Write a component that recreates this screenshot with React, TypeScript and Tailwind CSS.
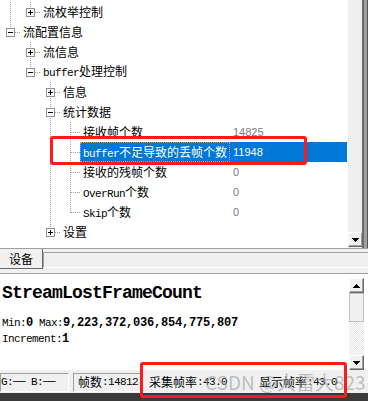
import React from "react";

type CellType = "empty" | "vline" | "tee" | "elbow";
type BoxType = "plus" | "minus" | undefined;

interface TreeRow {
  cells: CellType[];
  box?: BoxType;
  label: string;
  value?: string;
  selected?: boolean;
}

const rows: TreeRow[] = [
  { cells: ["vline", "elbow"], box: "plus", label: "流枚举控制" },
  { cells: ["elbow"], box: "minus", label: "流配置信息" },
  { cells: ["empty", "tee"], box: "plus", label: "流信息" },
  { cells: ["empty", "elbow"], box: "minus", label: "buffer处理控制" },
  { cells: ["empty", "empty", "tee"], box: "plus", label: "信息" },
  { cells: ["empty", "empty", "tee"], box: "minus", label: "统计数据" },
  { cells: ["empty", "empty", "vline", "tee"], label: "接收帧个数", value: "14825" },
  { cells: ["empty", "empty", "vline", "tee"], label: "buffer不足导致的丢帧个数", value: "11948", selected: true },
  { cells: ["empty", "empty", "vline", "tee"], label: "接收的残帧个数", value: "0" },
  { cells: ["empty", "empty", "vline", "tee"], label: "OverRun个数", value: "0" },
  { cells: ["empty", "empty", "vline", "elbow"], label: "Skip个数", value: "0" },
  { cells: ["empty", "empty", "elbow"], box: "plus", label: "设置" },
];

const CJK = "'Noto Sans CJK SC', 'Liberation Sans', sans-serif";
const MONO = "'Liberation Mono', 'Noto Sans CJK SC', monospace";

function Mixed({ text }: { text: string }) {
  const parts = text.split(/([A-Za-z0-9]+)/).filter((p) => p.length > 0);
  return (
    <>
      {parts.map((p, i) =>
        /^[A-Za-z0-9]+$/.test(p) ? (
          <span key={i} className="text-[11px] tracking-[-0.6px]" style={{ fontFamily: MONO }}>
            {p}
          </span>
        ) : (
          <span key={i}>{p}</span>
        )
      )}
    </>
  );
}

function Cell({ type, box }: { type: CellType; box?: BoxType }) {
  return (
    <svg width="20" height="20" viewBox="0 0 20 20" shapeRendering="crispEdges" className="shrink-0 block">
      {type !== "empty" && (
        <line x1="10.5" y1="0" x2="10.5" y2={type === "elbow" ? 11 : 20} stroke="#a0a0a0" strokeDasharray="1 1" />
      )}
      {(type === "tee" || type === "elbow") && (
        <line x1="11" y1="10.5" x2="20" y2="10.5" stroke="#a0a0a0" strokeDasharray="1 1" />
      )}
      {box && (
        <>
          <rect x="6.5" y="6.5" width="8" height="8" fill="white" stroke="#919191" />
          <line x1="8" y1="10.5" x2="13" y2="10.5" stroke="black" />
          {box === "plus" && <line x1="10.5" y1="8" x2="10.5" y2="13" stroke="black" />}
        </>
      )}
    </svg>
  );
}

function TreeLine({ row }: { row: TreeRow }) {
  const last = row.cells.length - 1;
  return (
    <div className="flex h-[20px] items-center">
      {row.cells.map((c, i) => (
        <Cell key={i} type={c} box={i === last ? row.box : undefined} />
      ))}
      {row.value === undefined ? (
        <span className="pl-[3px] text-[12px] leading-[20px] text-black whitespace-nowrap">
          <Mixed text={row.label} />
        </span>
      ) : (
        <div className={`flex flex-1 h-[20px] ${row.selected ? "bg-[#0078d7] text-white" : "text-black"}`}>
          <span
            className={`w-[150px] shrink-0 pl-[3px] text-[12px] leading-[20px] whitespace-nowrap ${
              row.selected ? "outline outline-1 outline-dotted outline-[#e8a040] -outline-offset-1" : ""
            }`}
          >
            <Mixed text={row.label} />
          </span>
          <span
            className={`pl-[3px] text-[11px] leading-[20px] ${row.selected ? "text-white" : "text-[#7a7a7a]"}`}
            style={{ fontFamily: "'Liberation Sans', sans-serif" }}
          >
            {row.value}
          </span>
        </div>
      )}
    </div>
  );
}

function ArrowButton({ dir }: { dir: "up" | "down" }) {
  return (
    <div className="w-[15px] h-[15px] bg-[#f0f0f0] border-t border-l border-t-white border-l-white border-b border-r border-b-[#696969] border-r-[#696969] flex items-center justify-center shadow-[inset_-1px_-1px_0_#a0a0a0]">
      <svg width="7" height="4" viewBox="0 0 7 4" shapeRendering="crispEdges">
        {dir === "down" ? <polygon points="0,0 7,0 3.5,4" fill="black" /> : <polygon points="0,4 7,4 3.5,0" fill="black" />}
      </svg>
    </div>
  );
}

export default function App() {
  return (
    <div
      className="relative w-[368px] h-[401px] overflow-hidden bg-[#f0f0f0] flex flex-col"
      style={{ fontFamily: CJK }}
    >
      {/* Tree area */}
      <div className="h-[249px] flex shrink-0 border-b border-[#a0a0a0]">
        <div className="w-[347px] bg-white pt-[2px] overflow-hidden">
          {rows.map((r, i) => (
            <TreeLine key={i} row={r} />
          ))}
        </div>
        <div className="w-[15px] bg-[#efefef] border-l border-[#f7f7f7] flex flex-col justify-end pb-[1px]">
          <ArrowButton dir="down" />
        </div>
        <div className="flex-1 bg-[#a0a0a0] border-l-2 border-[#6a6a6a] border-r border-r-[#555]" />
      </div>

      {/* Tab strip */}
      <div className="h-[24px] shrink-0 flex items-start">
        <div className="w-[43px] h-[20px] bg-[#f0f0f0] border-r border-b border-[#696969] flex items-center justify-center text-[12px] text-black">
          设备
        </div>
        <div className="flex-1 mt-[3px] h-[16px] border-t border-l border-[#a0a0a0] border-b border-b-white" />
      </div>

      {/* Content area */}
      <div className="h-[97px] shrink-0 flex bg-white border-t border-[#a0a0a0]">
        <div className="flex-1 pl-[2px] pt-[9px] text-black" style={{ fontFamily: MONO }}>
          <div className="text-[18px] tracking-[-0.8px] font-bold leading-[20px]">StreamLostFrameCount</div>
          <div className="mt-[12px] leading-[15px] whitespace-nowrap">
            <span className="text-[11px] tracking-[-0.6px]">Min:</span>
            <span className="text-[12px] tracking-[-0.2px] font-bold">0</span>
            <span className="text-[11px] tracking-[-0.6px]"> Max:</span>
            <span className="text-[12px] tracking-[-0.2px] font-bold">9,223,372,036,854,775,807</span>
          </div>
          <div className="leading-[15px] whitespace-nowrap">
            <span className="text-[11px] tracking-[-0.6px]">Increment:</span>
            <span className="text-[12px] tracking-[-0.2px] font-bold">1</span>
          </div>
        </div>
        <div className="w-[15px] mr-[4px] mt-[4px] flex flex-col">
          <ArrowButton dir="up" />
          <div className="h-[29px] bg-[#f0f0f0] border border-[#c0c0c0]" />
          <div className="flex-1 bg-[repeating-conic-gradient(#ffffff_0_25%,#e6e6e6_0_50%)] bg-[length:2px_2px]" />
          <ArrowButton dir="down" />
        </div>
      </div>

      {/* Status bar */}
      <div className="h-[23px] shrink-0 flex items-center gap-[4px] text-[12px] text-black pt-[1px]">
        <div className="w-[69px] h-[19px] border border-t-[#a0a0a0] border-l-[#a0a0a0] border-b-white border-r-white flex items-center whitespace-nowrap overflow-hidden">
          <span style={{ fontFamily: MONO }} className="text-[11px] tracking-[-0.6px]">G:──&nbsp;B:──</span>
        </div>
        <div className="w-[68px] h-[19px] border border-t-[#a0a0a0] border-l-[#a0a0a0] border-b-white border-r-white flex items-center pl-[4px] whitespace-nowrap">
          帧数<span style={{ fontFamily: MONO }} className="text-[11px] tracking-[-0.6px]">:14812</span>
        </div>
        <div className="w-[108px] h-[19px] flex items-center pl-[4px] whitespace-nowrap">
          采集帧率<span style={{ fontFamily: MONO }} className="text-[11px] tracking-[-0.6px]">:43.0</span>
        </div>
        <div className="flex-1 h-[19px] flex items-center pl-[2px] whitespace-nowrap">
          显示帧率<span style={{ fontFamily: MONO }} className="text-[11px] tracking-[-0.6px]">:43.0</span>
        </div>
      </div>
      <div className="flex-1 bg-[#3a3a3a]" />

      {/* Watermark */}
      <div
        className="absolute left-[205px] top-[371px] text-[19px] leading-[22px] text-[#9a9a9a]/60 whitespace-nowrap pointer-events-none"
        style={{ fontFamily: CJK }}
      >
        CSDN @大雷大823
      </div>

      {/* Red highlight boxes */}
      <div className="absolute left-[50px] top-[136px] w-[257px] h-[29px] border-[3px] border-[#ff1a1a] rounded-[3px] pointer-events-none" />
      <div className="absolute left-[140px] top-[362px] w-[207px] h-[36px] border-[3px] border-[#ff1a1a] rounded-[3px] pointer-events-none" />
    </div>
  );
}
